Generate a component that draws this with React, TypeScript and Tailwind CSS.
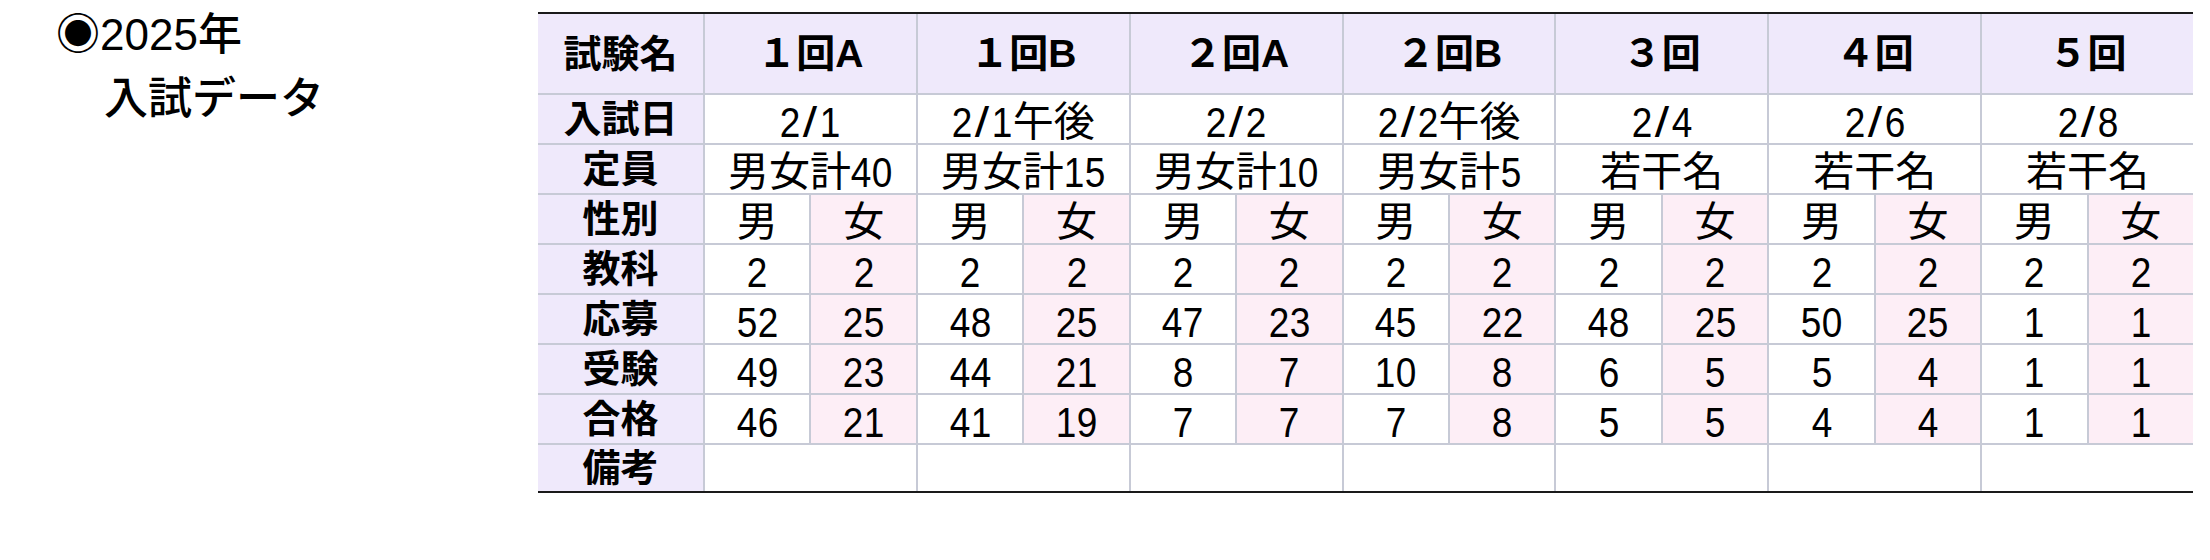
import React from "react";

const exams = [
  { name: "１回A", date: "2/1", cap: "男女計40", app: [52, 25], exam: [49, 23], pass: [46, 21] },
  { name: "１回B", date: "2/1午後", cap: "男女計15", app: [48, 25], exam: [44, 21], pass: [41, 19] },
  { name: "２回A", date: "2/2", cap: "男女計10", app: [47, 23], exam: [8, 7], pass: [7, 7] },
  { name: "２回B", date: "2/2午後", cap: "男女計5", app: [45, 22], exam: [10, 8], pass: [7, 8] },
  { name: "３回", date: "2/4", cap: "若干名", app: [48, 25], exam: [6, 5], pass: [5, 5] },
  { name: "４回", date: "2/6", cap: "若干名", app: [50, 25], exam: [5, 4], pass: [4, 4] },
  { name: "５回", date: "2/8", cap: "若干名", app: [1, 1], exam: [1, 1], pass: [1, 1] },
];

// half-width chars are drawn narrow and evenly spaced, kanji stay full width
const Txt = ({ value }: { value: string | number }) => (
  <>
    {Array.from(String(value)).map((ch, i) =>
      ch === "/" ? (
        <span key={i} className="inline-flex w-[19px] justify-center">
          <span className="inline-block text-[43px] scale-x-[1.2]">{ch}</span>
        </span>
      ) : /[0-9]/.test(ch) ? (
        <span key={i} className="inline-flex w-[21px] justify-center">
          <span className="inline-block text-[43px] scale-x-[0.86]">{ch}</span>
        </span>
      ) : (
        <span key={i}>{ch}</span>
      )
    )}
  </>
);

const cell = "flex items-center justify-center pt-[6px] text-[41px] leading-none";

const Label = ({ children }: { children: React.ReactNode }) => (
  <div className="bg-[#efe9fb] flex items-center justify-center font-bold text-[38px] leading-none">
    {children}
  </div>
);

const Wide = ({ value }: { value?: string }) => (
  <div className={`col-span-2 bg-white ${cell}`}>{value ? <Txt value={value} /> : null}</div>
);

const Pair = ({ values }: { values: (string | number)[] }) => (
  <>
    <div className={`bg-white ${cell}`}>
      <Txt value={values[0]} />
    </div>
    <div className={`bg-[#fdeef6] ${cell}`}>
      <Txt value={values[1]} />
    </div>
  </>
);

export default function App() {
  return (
    <div className="flex w-[2210px] h-[560px] bg-white text-black font-['Liberation_Sans','Noto_Sans_CJK_JP',sans-serif]">
      <div className="w-[538px] shrink-0 pl-[56px] pt-[3px] text-[44px] leading-[64px] font-medium">
        <div>◉2025年</div>
        <div className="pl-[48px]">入試データ</div>
      </div>

      <div className="mt-[12px] w-[1655px] h-[481px] shrink-0 grid grid-cols-[165px_repeat(14,1fr)] grid-rows-[79px_repeat(7,48px)_46px] gap-[2px] bg-[#c7cad6] border-t-2 border-b-2 border-[#1a1a1a]">
        <Label>試験名</Label>
        {exams.map((e) => (
          <div
            key={e.name}
            className="col-span-2 bg-[#efe9fb] flex items-center justify-center font-semibold text-[39px] leading-none"
          >
            {e.name}
          </div>
        ))}

        <Label>入試日</Label>
        {exams.map((e) => (
          <Wide key={e.name} value={e.date} />
        ))}

        <Label>定員</Label>
        {exams.map((e) => (
          <Wide key={e.name} value={e.cap} />
        ))}

        <Label>性別</Label>
        {exams.map((e) => (
          <Pair key={e.name} values={["男", "女"]} />
        ))}

        <Label>教科</Label>
        {exams.map((e) => (
          <Pair key={e.name} values={[2, 2]} />
        ))}

        <Label>応募</Label>
        {exams.map((e) => (
          <Pair key={e.name} values={e.app} />
        ))}

        <Label>受験</Label>
        {exams.map((e) => (
          <Pair key={e.name} values={e.exam} />
        ))}

        <Label>合格</Label>
        {exams.map((e) => (
          <Pair key={e.name} values={e.pass} />
        ))}

        <Label>備考</Label>
        {exams.map((e) => (
          <Wide key={e.name} />
        ))}
      </div>
    </div>
  );
}
